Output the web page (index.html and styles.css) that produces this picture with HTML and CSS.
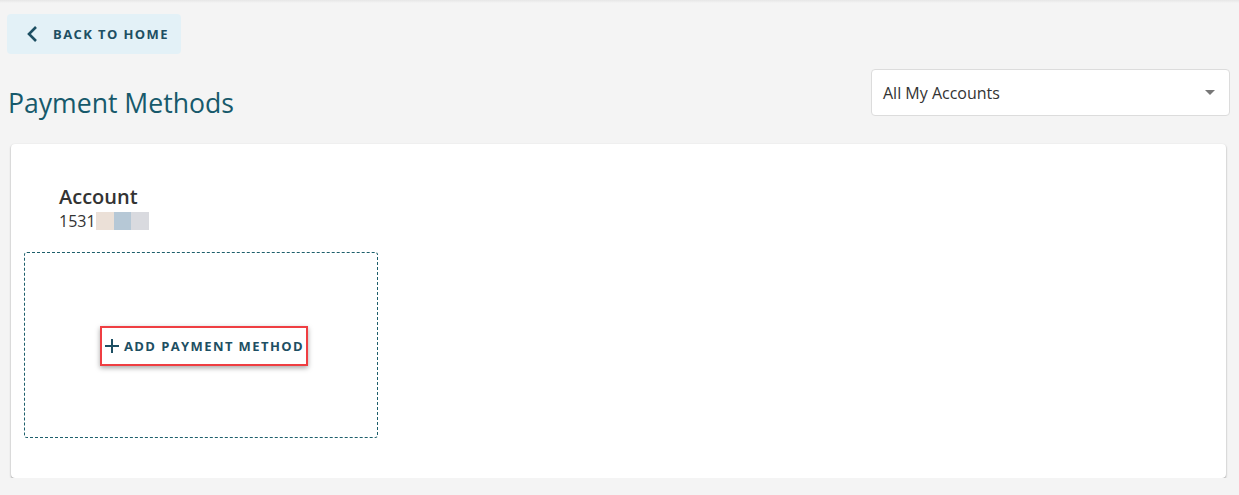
FILE: index.html
```html
<!DOCTYPE html>
<html lang="en">
<head>
  <meta charset="UTF-8">
  <meta name="viewport" content="width=device-width, initial-scale=1.0">
  <title>Payment Methods</title>
  <link rel="stylesheet" href="styles.css">
</head>
<body>
  <div class="topbar"></div>
  <div class="page">
    <a class="back-btn" href="#">
      <svg class="back-icon" width="14" height="18" viewBox="0 0 14 18">
        <path d="M11 2 L4 9 L11 16" fill="none" stroke="#1d4f63" stroke-width="2.6"/>
      </svg>
      <span>BACK TO HOME</span>
    </a>

    <div class="title-row">
      <h1>Payment Methods</h1>
      <div class="select">
        <span>All My Accounts</span>
        <span class="caret"></span>
      </div>
    </div>

    <div class="card">
      <div class="account">
        <h2>Account</h2>
        <div class="acct-num">1531<span class="mask m1"></span><span class="mask m2"></span><span class="mask m3"></span></div>
      </div>
      <div class="add-box">
        <button class="add-btn">
          <svg class="plus" width="16" height="16" viewBox="0 0 16 16">
            <path d="M8 1 V15 M1 8 H15" stroke="#1d4f63" stroke-width="2"/>
          </svg>
          ADD PAYMENT METHOD
        </button>
      </div>
    </div>
  </div>
</body>
</html>
```

FILE: styles.css
```css
body {
  margin: 0;
  background: #f4f4f4;
  font-family: "Open Sans", Arial, sans-serif;
  color: #333;
}

.topbar {
  height: 3px;
  background: linear-gradient(#e6e6e6, #f4f4f4);
}

.page {
  padding: 11px 9px 0 7px;
}

.back-btn {
  display: inline-flex;
  align-items: center;
  height: 40px;
  width: 174px;
  box-sizing: border-box;
  padding-left: 18px;
  background: #e3f1f7;
  border-radius: 4px;
  text-decoration: none;
  color: #1d4f63;
  font-weight: 700;
  font-size: 13px;
  letter-spacing: 1.4px;
}

.back-icon {
  margin-right: 14px;
}

.title-row {
  display: flex;
  justify-content: space-between;
  align-items: flex-start;
  margin-top: 15px;
}

h1 {
  margin: 16px 0 0 1px;
  font-size: 26.6px;
  font-weight: 400;
  color: #17596b;
}

.select {
  width: 359px;
  height: 47px;
  box-sizing: border-box;
  background: #fff;
  border: 1px solid #dcdcdc;
  border-radius: 4px;
  display: flex;
  align-items: center;
  justify-content: space-between;
  padding: 0 14px 0 11px;
  font-size: 16px;
  color: #333;
}

.caret {
  width: 0;
  height: 0;
  border-left: 5px solid transparent;
  border-right: 5px solid transparent;
  border-top: 5px solid #777;
}

.card {
  margin: 23px 4px 0 4px;
  height: 334px;
  background: #fff;
  border-radius: 4px;
  box-shadow: 0 1px 2px rgba(0, 0, 0, 0.4);
  padding: 40px 13px 0 13px;
  box-sizing: border-box;
}

.account {
  padding-left: 35px;
}

h2 {
  margin: 0;
  font-size: 20px;
  font-weight: 600;
  color: #333;
  line-height: 26px;
}

.acct-num {
  font-size: 16px;
  color: #333;
  display: flex;
  align-items: center;
  line-height: 22px;
}

.mask {
  display: inline-block;
  width: 17px;
  height: 18px;
}

.m1 { background: #ebe0d7; width: 18px; }
.m2 { background: #b6c8d6; }
.m3 { background: #d9dadf; width: 18px; }

.add-box {
  margin-top: 20px;
  width: 354px;
  height: 186px;
  box-sizing: border-box;
  border: 1px dashed #1d5f6b;
  border-radius: 3px;
  display: flex;
  align-items: center;
  justify-content: center;
}

.add-btn {
  margin-left: 6px;
  margin-top: 2px;
  height: 40px;
  width: 208px;
  border: 2px solid #ef3e42;
  background: #fff;
  box-shadow: 0 2px 5px rgba(0, 0, 0, 0.35);
  font-family: "Open Sans", Arial, sans-serif;
  font-size: 13px;
  font-weight: 700;
  letter-spacing: 1.4px;
  color: #1d4f63;
  display: flex;
  align-items: center;
  justify-content: center;
  padding: 0;
}

.plus {
  margin-right: 4px;
}
```
